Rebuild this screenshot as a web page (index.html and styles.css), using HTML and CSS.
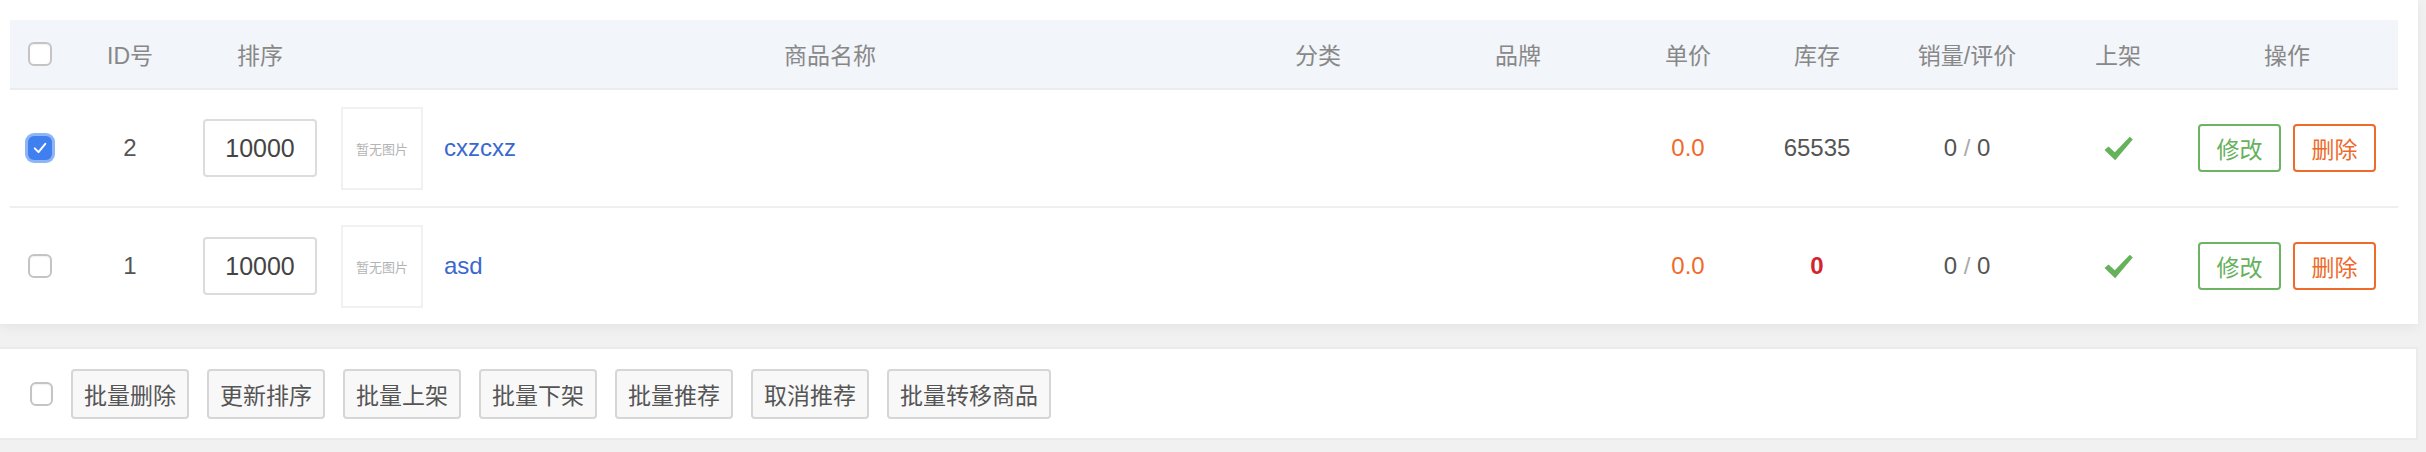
FILE: index.html
```html
<!DOCTYPE html>
<html lang="zh-CN">
<head>
<meta charset="utf-8">
<title>商品列表</title>
<link rel="stylesheet" href="styles.css">
</head>
<body>
<div class="page">
  <div class="card">
    <div class="table">
      <div class="row head">
        <div class="cell"><span class="cb"></span></div>
        <div class="cell">ID号</div>
        <div class="cell">排序</div>
        <div class="cell name-head">商品名称</div>
        <div class="cell">分类</div>
        <div class="cell">品牌</div>
        <div class="cell">单价</div>
        <div class="cell">库存</div>
        <div class="cell">销量/评价</div>
        <div class="cell">上架</div>
        <div class="cell">操作</div>
      </div>
      <div class="row item">
        <div class="cell"><span class="cb checked"><svg viewBox="0 0 24 24" width="18" height="18"><path d="M5 12.5 L10 17.5 L19 6.5" fill="none" stroke="#fff" stroke-width="2.6" stroke-linecap="round" stroke-linejoin="round"/></svg></span></div>
        <div class="cell num">2</div>
        <div class="cell"><span class="sort-input">10000</span></div>
        <div class="cell name">
          <span class="thumb">暂无图片</span>
          <span class="link">cxzcxz</span>
        </div>
        <div class="cell"></div>
        <div class="cell"></div>
        <div class="cell price">0.0</div>
        <div class="cell num">65535</div>
        <div class="cell num"><span>0 <span class="slash">/</span> 0</span></div>
        <div class="cell"><svg class="ok" viewBox="0 0 29 25" width="29" height="25"><path d="M0.5 14 L4.5 10.5 L10.8 16.2 L25.8 0.8 L28.8 3.6 L11.2 24.2 Z" fill="#66b15c"/></svg></div>
        <div class="cell ops"><span class="btn edit">修改</span><span class="btn del">删除</span></div>
      </div>
      <div class="row item last">
        <div class="cell"><span class="cb"></span></div>
        <div class="cell num">1</div>
        <div class="cell"><span class="sort-input">10000</span></div>
        <div class="cell name">
          <span class="thumb">暂无图片</span>
          <span class="link">asd</span>
        </div>
        <div class="cell"></div>
        <div class="cell"></div>
        <div class="cell price">0.0</div>
        <div class="cell stock-zero">0</div>
        <div class="cell num"><span>0 <span class="slash">/</span> 0</span></div>
        <div class="cell"><svg class="ok" viewBox="0 0 29 25" width="29" height="25"><path d="M0.5 14 L4.5 10.5 L10.8 16.2 L25.8 0.8 L28.8 3.6 L11.2 24.2 Z" fill="#66b15c"/></svg></div>
        <div class="cell ops"><span class="btn edit">修改</span><span class="btn del">删除</span></div>
      </div>
    </div>
  </div>
  <div class="footer">
    <span class="cb small"></span>
    <span class="fbtn">批量删除</span>
    <span class="fbtn">更新排序</span>
    <span class="fbtn">批量上架</span>
    <span class="fbtn">批量下架</span>
    <span class="fbtn">批量推荐</span>
    <span class="fbtn">取消推荐</span>
    <span class="fbtn">批量转移商品</span>
  </div>
</div>
</body>
</html>
```
FILE: styles.css
```css
* { box-sizing: border-box; }
html, body {
  margin: 0;
  padding: 0;
  background: #f1f1f1;
  font-family: "Liberation Sans", "Noto Sans CJK SC", sans-serif;
  color: #555;
}
.page {
  padding-right: 8px;
}
.card {
  background: #fff;
  padding: 20px 20px 0 10px;
  box-shadow: 0 3px 12px rgba(0, 0, 0, 0.06);
}
.row {
  display: grid;
  grid-template-columns: 60px 120px 140px 886px 204px 196px 144px 114px 186px 116px 222px;
  align-items: center;
}
.head {
  height: 70px;
  background: #f2f5fa;
  border-bottom: 2px solid #ececec;
  font-size: 23px;
  color: #888;
}
.item {
  height: 118px;
  border-bottom: 2px solid #efefef;
  font-size: 24px;
}
.item.last {
  height: 116px;
  border-bottom: 0;
}
.cell {
  display: flex;
  justify-content: center;
  align-items: center;
  white-space: nowrap;
}
.name-head {
  padding-left: 114px;
}
.cb {
  display: inline-flex;
  align-items: center;
  justify-content: center;
  width: 24px;
  height: 24px;
  border: 2px solid #c4c4c4;
  border-radius: 6px;
  background: #fff;
  box-shadow: inset 0 1px 2px rgba(0,0,0,0.06);
}
.cb.checked {
  background: #3f7ff0;
  border-color: #3f7ff0;
  box-shadow: 0 0 0 3px #8db4f5;
}
.cb.small {
  width: 23px;
  height: 24px;
}
.num { color: #555; }
.sort-input {
  display: inline-flex;
  align-items: center;
  justify-content: center;
  width: 114px;
  height: 58px;
  border: 2px solid #dcdcdc;
  border-radius: 4px;
  font-size: 25px;
  color: #444;
}
.name {
  justify-content: flex-start;
  padding-left: 11px;
  gap: 21px;
}
.thumb {
  display: inline-flex;
  align-items: center;
  justify-content: center;
  width: 82px;
  height: 83px;
  border: 2px solid #f1f1f1;
  font-size: 13px;
  color: #b4b4b4;
  font-family: "Noto Sans CJK SC", serif;
}
.link {
  color: #3a68cf;
  font-size: 24px;
}
.price {
  color: #f06a2a;
}
.stock-zero {
  color: #d2252f;
  font-weight: bold;
}
.slash {
  color: #aaa;
}
.ops {
  gap: 12px;
}
.btn {
  display: inline-flex;
  align-items: center;
  justify-content: center;
  width: 83px;
  height: 48px;
  border: 2px solid;
  border-radius: 4px;
  font-size: 23px;
  background: #fff;
}
.btn.edit {
  color: #67b15d;
  border-color: #6cb463;
}
.btn.del {
  color: #ee6a2a;
  border-color: #ef6b2b;
}
.footer {
  margin-top: 23px;
  height: 93px;
  background: #fff;
  border: 2px solid #ebebeb;
  border-left: 0;
  display: flex;
  align-items: center;
  gap: 18px;
  padding-left: 30px;
}
.fbtn {
  display: inline-flex;
  align-items: center;
  justify-content: center;
  height: 50px;
  padding: 0 11px;
  border: 2px solid #d6d6d6;
  border-radius: 4px;
  background: #f8f8f8;
  font-size: 23px;
  color: #555;
  white-space: nowrap;
}
```
